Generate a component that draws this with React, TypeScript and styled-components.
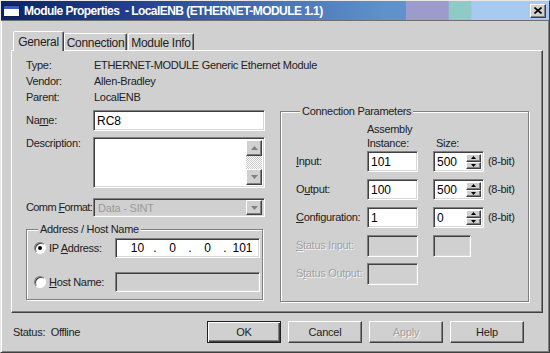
import styled, { createGlobalStyle, css } from 'styled-components';

const GlobalStyle = createGlobalStyle`
  html, body {
    margin: 0;
    padding: 0;
    background: #d0d0d0;
  }
  body {
    font-family: "Liberation Sans", Arial, sans-serif;
    font-size: 11px;
    color: #222;
  }
  * {
    box-sizing: border-box;
  }
`;

const face = '#d0d0d0';

const raised = css`
  border: 1px solid;
  border-color: #fff #404040 #404040 #fff;
  box-shadow: inset -1px -1px 0 #808080;
  background: ${face};
`;

const sunken = css`
  border: 1px solid;
  border-color: #808080 #fff #fff #808080;
  box-shadow: inset 1px 1px 0 #404040, inset -1px -1px 0 #d8d8d8;
`;

const etched = css`
  border: 1px solid #808080;
  box-shadow: 1px 1px 0 #fff, inset 1px 1px 0 #fff;
`;

const Window = styled.div`
  width: 550px;
  height: 353px;
  background: ${face};
  border: 1px solid;
  border-color: #e8e8e8 #404040 #404040 #e8e8e8;
  box-shadow: inset 1px 1px 0 #fff, inset -1px -1px 0 #808080;
  display: flex;
  flex-direction: column;
`;

const TitleBar = styled.div`
  height: 20px;
  display: flex;
  align-items: center;
  padding: 0 2px 0 2px;
  border-bottom: 1px solid #6e6e6e;
  background: linear-gradient(
    to right,
    #0b2468 0%,
    #24418e 25%,
    #4a72b8 50%,
    #5e92c8 70%,
    #5f93c9 73.8%,
    #9b9ccc 74%,
    #9b9ccc 81.6%,
    #8ecac6 81.8%,
    #8ecac6 85.6%,
    #a6caf0 86%,
    #a6caf0 100%
  );
`;

const TitleText = styled.span`
  flex: 1;
  margin-left: 4px;
  color: #fff;
  font-weight: 700;
  font-size: 12px;
  letter-spacing: -0.55px;
  white-space: pre;
`;

const CloseButton = styled.div`
  ${raised};
  width: 16px;
  height: 14px;
  display: flex;
  align-items: center;
  justify-content: center;
  margin-right: 1px;
`;

const Body = styled.div`
  flex: 1;
  display: flex;
  flex-direction: column;
  padding: 10px 6px 0 10px;
`;

const TabStrip = styled.div`
  display: flex;
  align-items: flex-end;
  height: 19px;
  padding-left: 2px;
`;

const Tab = styled.div<{ $active?: boolean; $w: number; $gap?: number }>`
  width: ${(p) => p.$w}px;
  height: ${(p) => (p.$active ? 20 : 17)}px;
  margin-bottom: ${(p) => (p.$active ? -1 : 0)}px;
  margin-left: ${(p) => p.$gap ?? 0}px;
  position: relative;
  z-index: ${(p) => (p.$active ? 2 : 0)};
  background: ${face};
  border: 1px solid;
  border-bottom: none;
  border-color: #fff #404040 transparent #fff;
  border-radius: 2px 2px 0 0;
  box-shadow: inset -1px 0 0 #808080;
  display: flex;
  justify-content: center;
  padding-top: ${(p) => (p.$active ? 3 : 2)}px;
  font-size: 12px;
  letter-spacing: -0.3px;
  color: #222;
`;

const Panel = styled.div`
  ${raised};
  height: 263px;
  padding: 6px 13px 0 14px;
  display: flex;
  flex-direction: column;
  position: relative;
  z-index: 1;
`;

const InfoRow = styled.div`
  display: grid;
  grid-template-columns: 68px auto;
  line-height: 16px;
  letter-spacing: -0.3px;
`;

const MainRow = styled.div`
  display: flex;
  gap: 15px;
  align-items: flex-start;
`;

const LeftCol = styled.div`
  width: 239px;
  display: flex;
  flex-direction: column;
`;

const FieldRow = styled.div<{ $top: number; $start?: boolean }>`
  display: grid;
  grid-template-columns: 67px 172px;
  align-items: ${(p) => (p.$start ? 'start' : 'center')};
  margin-top: ${(p) => p.$top}px;
`;

const Label = styled.span<{ $disabled?: boolean; $tight?: boolean }>`
  line-height: 13px;
  letter-spacing: ${(p) => (p.$tight ? '-0.6px' : '-0.3px')};
  white-space: nowrap;
  color: ${(p) => (p.$disabled ? '#a2a2a2' : '#222')};
  text-shadow: ${(p) => (p.$disabled ? '1px 1px 0 #f4f4f4' : 'none')};
`;

const Key = styled.span`
  text-decoration: underline;
  text-underline-offset: 1px;
`;

const TextBox = styled.div<{ $w?: number; $h: number; $disabled?: boolean }>`
  ${sunken};
  width: ${(p) => (p.$w ? `${p.$w}px` : '100%')};
  height: ${(p) => p.$h}px;
  background: ${(p) => (p.$disabled ? face : '#fff')};
  display: flex;
  align-items: center;
  padding: 0 3px;
  font-size: 12px;
  color: #000;
  position: relative;
`;

const IpBox = styled(TextBox)`
  padding-left: 10px;
`;

const MemoBox = styled.div`
  ${sunken};
  height: 51px;
  background: #fff;
  display: flex;
  justify-content: flex-end;
  padding: 2px;
`;

const ScrollBar = styled.div`
  width: 16px;
  display: flex;
  flex-direction: column;
  justify-content: space-between;
  background: repeating-conic-gradient(#fff 0 25%, #c8c8c8 0 50%) 0 0 / 2px 2px;
`;

const ArrowButton = styled.div<{ $h?: number; $w?: number }>`
  ${raised};
  width: ${(p) => p.$w ?? 16}px;
  height: ${(p) => p.$h ?? 16}px;
  display: flex;
  align-items: center;
  justify-content: center;
`;

const SelectBox = styled.div`
  ${sunken};
  height: 19px;
  background: ${face};
  display: flex;
  align-items: center;
  justify-content: space-between;
  padding: 1px 2px 1px 4px;
  color: #9a9a9a;
  font-size: 11px;
  letter-spacing: -0.2px;
`;

const GroupBox = styled.fieldset<{ $pad: string; $w?: number; $top?: number }>`
  ${etched};
  margin: ${(p) => p.$top ?? 0}px 0 0 0;
  min-width: 0;
  flex: ${(p) => (p.$w ? 'none' : '1')};
  width: ${(p) => (p.$w ? `${p.$w}px` : 'auto')};
  padding: ${(p) => p.$pad};
`;

const Legend = styled.legend`
  padding: 0 2px;
  margin-left: 4px;
  line-height: 13px;
  letter-spacing: -0.3px;
  background: ${face};
`;

const RadioRow = styled.div<{ $top: number }>`
  display: flex;
  align-items: center;
  margin-top: ${(p) => p.$top}px;
`;

const RadioLabel = styled.label`
  width: 81px;
  display: flex;
  align-items: center;
  gap: 3px;
  letter-spacing: -0.3px;
  white-space: nowrap;
`;

const Radio = styled.span<{ $checked?: boolean }>`
  width: 12px;
  height: 12px;
  flex: none;
  border-radius: 50%;
  background: #fff;
  border: 1px solid;
  border-color: #808080 #fff #fff #808080;
  box-shadow: inset 1px 1px 0 #404040;
  display: flex;
  align-items: center;
  justify-content: center;
  &::after {
    content: '';
    width: 4px;
    height: 4px;
    border-radius: 50%;
    background: ${(p) => (p.$checked ? '#000' : 'transparent')};
  }
`;

const IpSegment = styled.span`
  width: 23px;
  text-align: center;
`;

const IpDot = styled.span`
  width: 12px;
  text-align: center;
`;

const ConnHeader = styled.div`
  display: grid;
  grid-template-columns: 71px 66px 55px;
  align-items: end;
  height: 29px;
  line-height: 14px;
  letter-spacing: -0.3px;
  padding-bottom: 1px;
`;

const SizeHead = styled.span`
  padding-left: 3px;
`;

const ConnGrid = styled.div`
  display: grid;
  grid-template-columns: 71px 66px 55px auto;
  grid-auto-rows: 21px;
  row-gap: 7px;
  align-items: center;
`;

const SpinBox = styled(TextBox)`
  padding: 2px 2px 2px 3px;
  justify-content: space-between;
`;

const SpinButtons = styled.div`
  display: flex;
  flex-direction: column;
  height: 100%;
`;

const Footer = styled.div`
  display: flex;
  align-items: center;
  margin-top: 8px;
  padding: 0 19px 0 2px;
`;

const StatusText = styled.span`
  flex: 1;
  white-space: pre;
  letter-spacing: -0.3px;
`;

const Buttons = styled.div`
  display: flex;
  gap: 7px;
`;

const Button = styled.div<{ $default?: boolean; $disabled?: boolean }>`
  ${raised};
  width: 74px;
  height: 22px;
  display: flex;
  align-items: center;
  justify-content: center;
  letter-spacing: -0.2px;
  color: ${(p) => (p.$disabled ? '#a2a2a2' : '#222')};
  text-shadow: ${(p) => (p.$disabled ? '1px 1px 0 #f4f4f4' : 'none')};
  ${(p) =>
    p.$default &&
    css`
      border-color: #202020;
      box-shadow: inset 1px 1px 0 #fff, inset -1px -1px 0 #404040, inset -2px -2px 0 #808080;
    `}
`;

function Arrow({ up, color = '#000' }: { up?: boolean; color?: string }) {
  return (
    <svg width="7" height="4" viewBox="0 0 7 4">
      <path d={up ? 'M0 4 L3.5 0 L7 4 Z' : 'M0 0 L7 0 L3.5 4 Z'} fill={color} />
    </svg>
  );
}

function SmallArrow({ up }: { up?: boolean }) {
  return (
    <svg width="5" height="3" viewBox="0 0 5 3">
      <path d={up ? 'M0 3 L2.5 0 L5 3 Z' : 'M0 0 L5 0 L2.5 3 Z'} fill="#000" />
    </svg>
  );
}

function WindowIcon() {
  return (
    <svg width="17" height="12" viewBox="0 0 17 12">
      <rect x="0.5" y="0.5" width="16" height="11" fill="#fff" stroke="#1a1a4a" />
      <rect x="1" y="1" width="15" height="3" fill="#3a5cc0" />
    </svg>
  );
}

function Spinner({ value }: { value: string }) {
  return (
    <SpinBox $w={51} $h={21}>
      {value}
      <SpinButtons>
        <ArrowButton $w={15} $h={8.5}>
          <SmallArrow up />
        </ArrowButton>
        <ArrowButton $w={15} $h={8.5}>
          <SmallArrow />
        </ArrowButton>
      </SpinButtons>
    </SpinBox>
  );
}

const ipParts = ['10', '0', '0', '101'];

export default function App() {
  return (
    <>
      <GlobalStyle />
      <Window>
        <TitleBar>
          <WindowIcon />
          <TitleText>Module Properties  - LocalENB (ETHERNET-MODULE 1.1)</TitleText>
          <CloseButton>
            <svg width="8" height="7" viewBox="0 0 8 7">
              <path d="M0.5 0.5 L7.5 6.5 M7.5 0.5 L0.5 6.5" stroke="#000" strokeWidth="1.6" />
            </svg>
          </CloseButton>
        </TitleBar>

        <Body>
          <TabStrip>
            <Tab $active $w={51}>General</Tab>
            <Tab $w={63}>Connection</Tab>
            <Tab $w={66} $gap={1}>Module Info</Tab>
          </TabStrip>

          <Panel>
            <InfoRow>
              <span>Type:</span>
              <span>ETHERNET-MODULE Generic Ethernet Module</span>
            </InfoRow>
            <InfoRow>
              <span>Vendor:</span>
              <span>Allen-Bradley</span>
            </InfoRow>
            <InfoRow>
              <span>Parent:</span>
              <span>LocalENB</span>
            </InfoRow>

            <MainRow>
              <LeftCol>
                <FieldRow $top={5}>
                  <Label>
                    Na<Key>m</Key>e:
                  </Label>
                  <TextBox $h={21}>RC8</TextBox>
                </FieldRow>
                <FieldRow $top={6} $start>
                  <Label>Description:</Label>
                  <MemoBox>
                    <ScrollBar>
                      <ArrowButton>
                        <Arrow up color="#808080" />
                      </ArrowButton>
                      <ArrowButton>
                        <Arrow color="#808080" />
                      </ArrowButton>
                    </ScrollBar>
                  </MemoBox>
                </FieldRow>
                <FieldRow $top={10}>
                  <Label $tight>
                    Comm <Key>F</Key>ormat:
                  </Label>
                  <SelectBox>
                    Data - SINT
                    <ArrowButton $h={15}>
                      <Arrow color="#808080" />
                    </ArrowButton>
                  </SelectBox>
                </FieldRow>

                <GroupBox $w={237} $top={6} $pad="2px 2px 7px 7px">
                  <Legend>Address / Host Name</Legend>
                  <RadioRow $top={0}>
                    <RadioLabel>
                      <Radio $checked />
                      <span>
                        IP <Key>A</Key>ddress:
                      </span>
                    </RadioLabel>
                    <IpBox $w={145} $h={20}>
                      {ipParts.map((part, i) => (
                        <span key={i} style={{ display: 'contents' }}>
                          <IpSegment>{part}</IpSegment>
                          {i < ipParts.length - 1 && <IpDot>.</IpDot>}
                        </span>
                      ))}
                    </IpBox>
                  </RadioRow>
                  <RadioRow $top={14}>
                    <RadioLabel>
                      <Radio />
                      <span>
                        <Key>H</Key>ost Name:
                      </span>
                    </RadioLabel>
                    <TextBox $w={145} $h={20} $disabled />
                  </RadioRow>
                </GroupBox>
              </LeftCol>

              <GroupBox $pad="4px 10px 17px 15px">
                <Legend>Connection Parameters</Legend>
                <ConnHeader>
                  <span />
                  <span>
                    Assembly
                    <br />
                    Instance:
                  </span>
                  <SizeHead>Size:</SizeHead>
                </ConnHeader>
                <ConnGrid>
                  <Label>
                    <Key>I</Key>nput:
                  </Label>
                  <TextBox $w={51} $h={21}>101</TextBox>
                  <Spinner value="500" />
                  <Label>(8-bit)</Label>

                  <Label>
                    O<Key>u</Key>tput:
                  </Label>
                  <TextBox $w={51} $h={21}>100</TextBox>
                  <Spinner value="500" />
                  <Label>(8-bit)</Label>

                  <Label>
                    <Key>C</Key>onfiguration:
                  </Label>
                  <TextBox $w={51} $h={21}>1</TextBox>
                  <Spinner value="0" />
                  <Label>(8-bit)</Label>

                  <Label $disabled>
                    <Key>S</Key>tatus Input:
                  </Label>
                  <TextBox $w={51} $h={22} $disabled />
                  <TextBox $w={38} $h={22} $disabled />
                  <span />

                  <Label $disabled>
                    S<Key>t</Key>atus Output:
                  </Label>
                  <TextBox $w={51} $h={22} $disabled />
                </ConnGrid>
              </GroupBox>
            </MainRow>
          </Panel>

          <Footer>
            <StatusText>Status:  Offline</StatusText>
            <Buttons>
              <Button $default>OK</Button>
              <Button>Cancel</Button>
              <Button $disabled>Apply</Button>
              <Button>Help</Button>
            </Buttons>
          </Footer>
        </Body>
      </Window>
    </>
  );
}
